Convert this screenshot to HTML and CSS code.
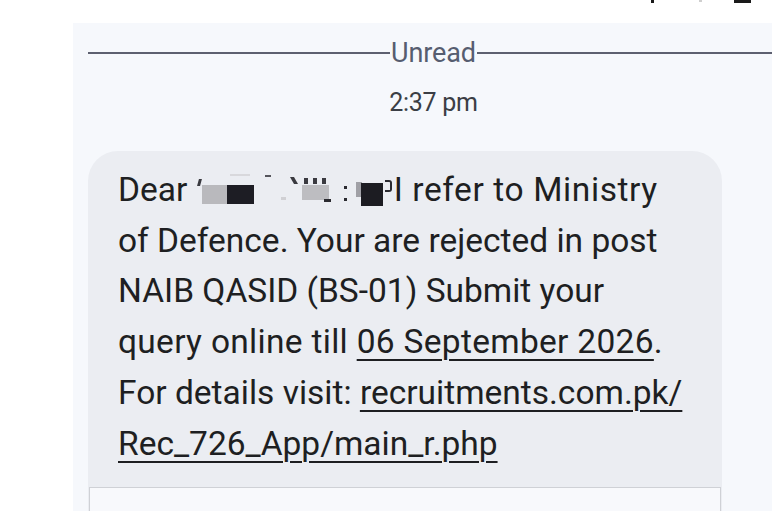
FILE: index.html
```html
<!DOCTYPE html>
<html lang="en">
<head>
<meta charset="utf-8">
<title>Message</title>
<link rel="stylesheet" href="styles.css">
</head>
<body>
<div class="status">
  <span class="st st-a"></span>
  <span class="st st-b"></span>
  <span class="st st-c"></span>
</div>
<main class="panel">
  <div class="divider">
    <span class="rule rule-left"></span>
    <span class="divider-label">Unread</span>
    <span class="rule rule-right"></span>
  </div>
  <div class="time">2:37 pm</div>
  <div class="bubble">
    <p class="msg">Dear <span class="redact"><span class="rb q"></span><span class="rb g1"></span><span class="rb k1"></span><span class="rb d1"></span><span class="rb d2"></span><span class="rb d3"></span><span class="rb t1"></span><span class="rb m1"></span><span class="rb g2"></span><span class="rb d4"></span><span class="rb c1"></span><span class="rb c2"></span><span class="rb g3"></span><span class="rb k2"></span><span class="rb r1"></span></span><span class="first">I refer to Ministry</span><br>of Defence. Your are rejected in post<br>NAIB QASID (BS-01) Submit your<br><span class="fourth">query online till <a class="lnk" href="#">06 September 2026</a>.</span><br>For details visit: <a class="lnk" href="#">recruitments.com.pk/<br>Rec_726_App/main_r.php</a></p>
    <div class="preview"></div>
  </div>
</main>
</body>
</html>
```

FILE: styles.css
```css
html, body {
  margin: 0;
  padding: 0;
  background: #ffffff;
  overflow: hidden;
}
body {
  width: 772px;
  height: 511px;
  font-family: Roboto, "Noto Sans", "Liberation Sans", sans-serif;
  position: relative;
}
.status {
  height: 23px;
}
.st {
  position: absolute;
  top: 0;
  background: #1a1a1a;
}
.st-a { left: 651px; width: 3px; height: 3px; }
.st-b { left: 699px; width: 3px; height: 2px; background: #cfcfcf; }
.st-c { left: 734px; width: 17px; height: 3px; }

.panel {
  margin-left: 73px;
  background: #f6f8fc;
  height: 488px;
  padding-top: 15px;
  box-sizing: border-box;
  overflow: hidden;
}
.divider {
  display: flex;
  align-items: center;
  padding-left: 15px;
  margin-right: -7px;
  height: 30px;
}
.rule {
  flex: 1;
  height: 2px;
  background: #5d6070;
}
.divider-label {
  font-size: 27px;
  line-height: 30px;
  color: #565d70;
  padding: 0 1px;
  letter-spacing: -0.1px;
}
.time {
  margin-top: 20px;
  padding-left: 22px;
  text-align: center;
  font-size: 25px;
  line-height: 30px;
  color: #3b3e45;
  letter-spacing: -0.3px;
}
.bubble {
  margin-top: 33px;
  margin-left: 15px;
  width: 634px;
  background: #ebedf2;
  border-radius: 30px 30px 0 0;
  padding: 14px 1px 0 1px;
  box-sizing: border-box;
}
.msg {
  margin: 0;
  padding: 0 0 18px 29px;
  font-size: 33.5px;
  line-height: 50.7px;
  color: #1e1f22;
  white-space: nowrap;
}
.first {
  letter-spacing: 0.6px;
}
.fourth {
  letter-spacing: 0.3px;
}
.lnk {
  color: #1e1f22;
  text-decoration: underline;
  text-decoration-thickness: 2px;
  text-underline-offset: 6px;
}
.redact {
  display: inline-block;
  position: relative;
  width: 198px;
  height: 30px;
  vertical-align: baseline;
}
.rb {
  position: absolute;
  display: block;
}
/* coordinates relative to redact box: left edge near x=197, bottom at baseline */
.q  { left: 2px;   bottom: 15px; width: 3px;  height: 7px;  background: #3a3a40; transform: skewX(-15deg); }
.g1 { left: 6px;   bottom: -3px; width: 25px; height: 19px; background: #b9b9bd; }
.k1 { left: 31px;  bottom: -3px; width: 27px; height: 19px; background: #1d1d24; }
.d1 { left: 34px;  bottom: 25px; width: 20px; height: 2px;  background: #d8d8dc; }
.d2 { left: 69px;  bottom: 24px; width: 6px;  height: 2px;  background: #55555c; }
.d3 { left: 85px;  bottom: 1px;  width: 5px;  height: 3px;  background: #d0d0d4; }
.t1 { left: 96px;  bottom: 17px; width: 4px;  height: 7px;  background: #3a3a40; transform: skewX(30deg); }
.m1 { left: 108px; bottom: 17px; width: 24px; height: 6px;  background: repeating-linear-gradient(90deg, #3a3a40 0 4px, transparent 4px 9px); }
.g2 { left: 106px; bottom: 1px;  width: 27px; height: 15px; background: #bdbdc1; }
.d4 { left: 128px; bottom: -1px; width: 7px;  height: 3px;  background: #2a2a30; }
.c1 { left: 148px; bottom: 12px; width: 3px;  height: 3px;  background: #2a2a30; }
.c2 { left: 148px; bottom: 0;    width: 3px;  height: 3px;  background: #2a2a30; }
.g3 { left: 160px; bottom: 4px;  width: 6px;  height: 15px; background: #a0a0a6; }
.k2 { left: 165px; bottom: -5px; width: 22px; height: 23px; background: #1c1c22; }
.r1 { left: 189px; bottom: 9px;  width: 5px;  height: 8px;  border-top: 2.5px solid #2a2a30; border-right: 2.5px solid #2a2a30; border-bottom: 2.5px solid #2a2a30; border-radius: 0 3px 3px 0; }

.preview {
  height: 60px;
  background: #f8f9fc;
  border: 1px solid #cfd1d6;
  border-bottom: none;
}
```
